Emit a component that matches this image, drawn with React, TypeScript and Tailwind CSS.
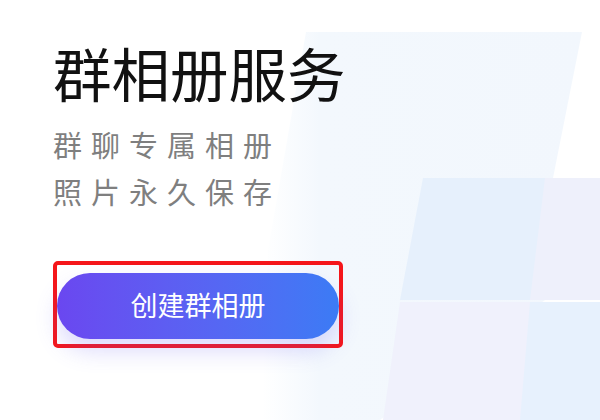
export default function App() {
  return (
    <div
      className="relative w-[600px] h-[420px] overflow-hidden bg-white"
      style={{ fontFamily: '"Noto Sans CJK SC", "Noto Sans", sans-serif' }}
    >
      {/* soft geometric backdrop */}
      <svg className="absolute inset-0" width="600" height="420" viewBox="0 0 600 420">
        <defs>
          <linearGradient id="fadeA" x1="0" y1="0" x2="1" y2="0">
            <stop offset="0" stopColor="#f4f9fe" stopOpacity="0" />
            <stop offset="0.18" stopColor="#f3f8fd" stopOpacity="1" />
            <stop offset="1" stopColor="#f2f7fd" />
          </linearGradient>
        </defs>
        <polygon points="306,32 582,32 553,178 545,300 380,420 262,420 268,250" fill="url(#fadeA)" />
        <polygon points="423,178 600,178 600,300 400,300" fill="#e6f0fc" />
        <polygon points="545,178 600,178 600,300 530,300" fill="#eef0fb" />
        <polygon points="400,302 600,302 600,420 383,420" fill="#f0f1fc" />
        <polygon points="530,302 600,302 600,420 520,420" fill="#e7f1fd" />
      </svg>

      <div className="relative flex flex-col items-start pl-[53px] pt-[43px]">
        <h1 className="text-[58.5px] leading-none font-normal text-[#111111]">群相册服务</h1>
        <div className="mt-[19px] text-[29px] leading-[47px] tracking-[9px] text-[#7f7f7f]">
          <p>群聊专属相册</p>
          <p>照片永久保存</p>
        </div>
        <div className="mt-[46px] w-[290px] h-[87px] border-4 border-[#f5161a] rounded-[5px] pt-[8px]">
          <button className="w-full h-[66px] rounded-full bg-linear-to-r from-[#6a47f0] to-[#3b7bf5] text-white text-[27px] shadow-[0_12px_22px_rgba(100,90,240,0.22)]">
            创建群相册
          </button>
        </div>
      </div>
    </div>
  );
}
